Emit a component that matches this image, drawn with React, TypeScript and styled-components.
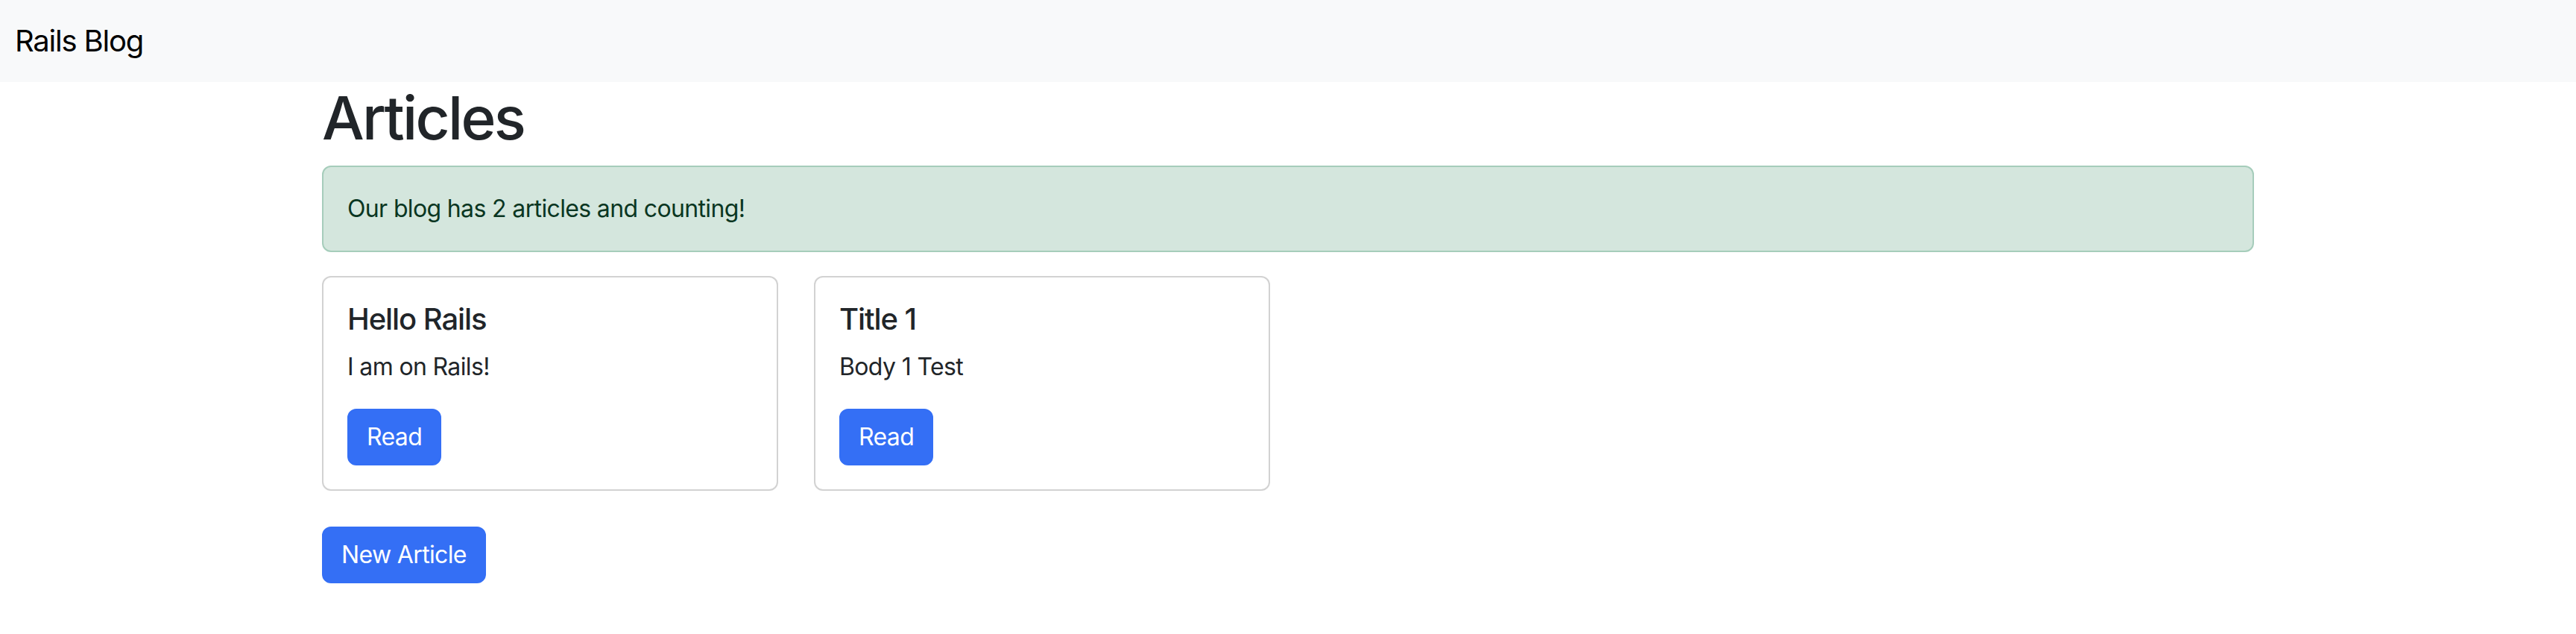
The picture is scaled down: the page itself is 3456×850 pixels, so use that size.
import React from "react";
import styled, { createGlobalStyle } from "styled-components";

const GlobalStyle = createGlobalStyle`
  html, body {
    margin: 0;
    padding: 0;
    background: #ffffff;
  }
  body {
    font-family: Inter, "Liberation Sans", "Noto Sans", sans-serif;
    font-size: 32px;
    line-height: 1.5;
    letter-spacing: -0.02em;
    color: #212529;
  }
  *, *::before, *::after { box-sizing: border-box; }
`;

const Navbar = styled.nav`
  background: #f8f9fa;
  padding: 15px 0;
  display: flex;
  align-items: center;
`;

const NavContainer = styled.div`
  width: 100%;
  padding: 0 20px;
  display: flex;
  align-items: center;
`;

const Brand = styled.a`
  font-size: 40px;
  line-height: 60px;
  padding: 10px 0;
  letter-spacing: -0.03em;
  color: #000000;
  text-decoration: none;
  white-space: nowrap;
`;

const Container = styled.main`
  max-width: 2640px;
  margin: 0 auto;
  padding: 0 24px;
`;

const Title = styled.h1`
  margin: 0 0 16px;
  font-size: 80px;
  font-weight: 500;
  line-height: 1.2;
  letter-spacing: -0.034em;
  color: #212529;
`;

const Alert = styled.div`
  padding: 32px;
  margin-bottom: 32px;
  background: #d4e6dd;
  border: 2px solid #a6cdbb;
  border-radius: 12px;
  color: #0a3622;
`;

const Row = styled.div`
  display: grid;
  grid-template-columns: repeat(4, 1fr);
  column-gap: 48px;
  margin-bottom: 48px;
`;

const Card = styled.div`
  background: #ffffff;
  border: 2px solid rgba(0, 0, 0, 0.175);
  border-radius: 12px;
  padding: 32px;
  display: flex;
  flex-direction: column;
  align-items: flex-start;
`;

const CardTitle = styled.h5`
  margin: 0 0 16px;
  font-size: 40px;
  font-weight: 500;
  line-height: 1.2;
  letter-spacing: -0.027em;
`;

const CardText = styled.p`
  margin: 0 0 32px;
`;

const Button = styled.a`
  display: inline-block;
  padding: 12px 24px;
  font-size: 32px;
  line-height: 48px;
  color: #ffffff;
  background: #346ff5;
  border: 2px solid #346ff5;
  border-radius: 12px;
  text-decoration: none;
  white-space: nowrap;
`;

const articles = [
  { title: "Hello Rails", body: "I am on Rails!" },
  { title: "Title 1", body: "Body 1 Test" },
];

export default function App() {
  return (
    <>
      <GlobalStyle />
      <Navbar>
        <NavContainer>
          <Brand href="#">Rails Blog</Brand>
        </NavContainer>
      </Navbar>
      <Container>
        <Title>Articles</Title>
        <Alert>Our blog has {articles.length} articles and counting!</Alert>
        <Row>
          {articles.map((a) => (
            <Card key={a.title}>
              <CardTitle>{a.title}</CardTitle>
              <CardText>{a.body}</CardText>
              <Button href="#">Read</Button>
            </Card>
          ))}
        </Row>
        <Button href="#">New Article</Button>
      </Container>
    </>
  );
}
